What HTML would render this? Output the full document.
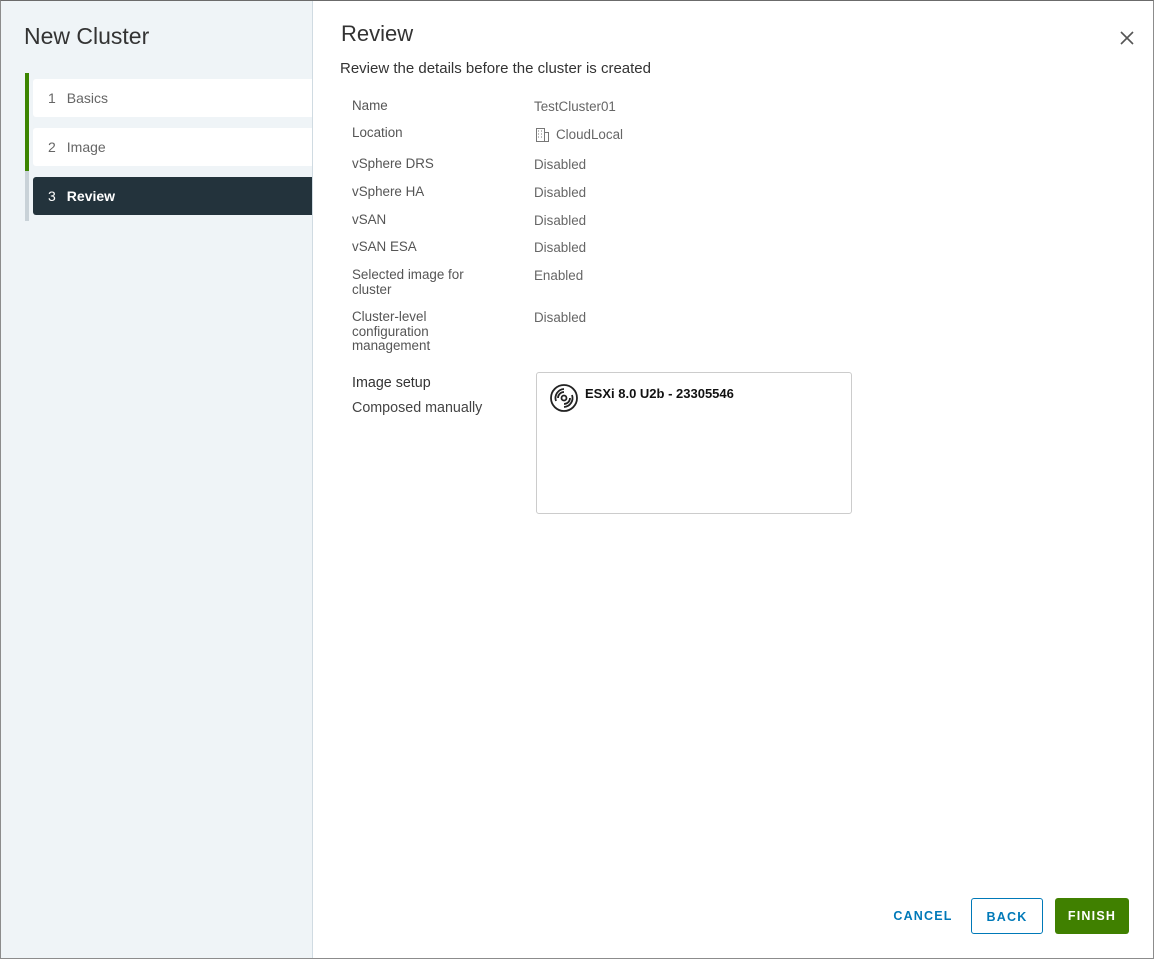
<!DOCTYPE html>
<html><head><style>
*{box-sizing:border-box;margin:0;padding:0}
body{width:1154px;height:959px;font-family:"Liberation Sans",sans-serif;background:#fff;position:relative;overflow:hidden}
.frame{position:absolute;left:0;top:0;width:1154px;height:959px;border:1px solid #8c8c8c;border-top-color:#6b6b6b}
.left{position:absolute;left:1px;top:1px;width:312px;height:957px;background:#eff4f7;border-right:1px solid #d0dbe2}
.title{position:absolute;left:24px;top:23px;font-size:23px;color:#333}
.bar{position:absolute;left:25px;width:4px}
.step{position:absolute;left:33px;width:279px;height:38px;background:#fff;border-radius:3px 0 0 3px;font-size:14px;color:#666;padding:11px 0 0 15px}
.step b{font-weight:normal;margin-right:11px}
.step.act{background:#23333c;color:#fff;font-weight:bold}
.h{position:absolute;left:341px;top:21px;font-size:22px;color:#333}
.sub{position:absolute;left:340px;top:60px;font-size:15px;color:#333}
.l{position:absolute;left:352px;font-size:13.4px;color:#555;line-height:14.5px}
.v{position:absolute;left:534px;font-size:13.4px;color:#666}
.box{position:absolute;left:536px;top:372px;width:316px;height:142px;border:1px solid #ccc;border-radius:3px}
.btn{position:absolute;top:898px;height:36px;font-size:12.5px;font-weight:bold;letter-spacing:1.2px;padding-top:11px;text-align:center;border-radius:3px}
</style></head><body>
<div class="left">
</div>
<div class="title">New Cluster</div>
<div class="bar" style="top:73px;height:98px;background:#3c8500"></div>
<div class="bar" style="top:171px;height:50px;background:#c9d2d8"></div>
<div class="step" style="top:79px"><b>1</b>Basics</div>
<div class="step" style="top:128px"><b>2</b>Image</div>
<div class="step act" style="top:177px"><b>3</b>Review</div>
<div class="h">Review</div>
<svg style="position:absolute;left:1120px;top:31px" width="14" height="14"><path d="M1 1L13 13M13 1L1 13" stroke="#555" stroke-width="1.6"/></svg>
<div class="sub">Review the details before the cluster is created</div>
<div class="l" style="top:99px">Name</div><div class="v" style="top:99px">TestCluster01</div>
<div class="l" style="top:126px">Location</div>
<svg style="position:absolute;left:536px;top:128px" width="13" height="14"><rect x="0.5" y="0.5" width="8" height="13" fill="none" stroke="#777"/><rect x="8.5" y="4.5" width="4" height="9" fill="none" stroke="#777"/><path d="M2 3h1M5 3h1M2 6h1M5 6h1M2 9h1M5 9h1" stroke="#777"/></svg>
<div class="v" style="top:127px;left:556px">CloudLocal</div>
<div class="l" style="top:157px">vSphere DRS</div><div class="v" style="top:157px">Disabled</div>
<div class="l" style="top:185px">vSphere HA</div><div class="v" style="top:185px">Disabled</div>
<div class="l" style="top:213px">vSAN</div><div class="v" style="top:213px">Disabled</div>
<div class="l" style="top:240px">vSAN ESA</div><div class="v" style="top:240px">Disabled</div>
<div class="l" style="top:268px">Selected image for<br>cluster</div><div class="v" style="top:268px">Enabled</div>
<div class="l" style="top:310px">Cluster-level<br>configuration<br>management</div><div class="v" style="top:310px">Disabled</div>
<div class="l" style="top:376px;font-size:14.3px;color:#333">Image setup</div>
<div class="l" style="top:401px;font-size:14.3px;color:#444">Composed manually</div>
<div class="box"></div>
<svg style="position:absolute;left:549px;top:383px" width="30" height="30" fill="none" stroke="#222" stroke-width="1.8"><circle cx="15" cy="15" r="13"/><circle cx="15" cy="15" r="2.5"/><path d="M9 15a6 6 0 0 1 6-6M7 18a9 9 0 0 1 8-12M21 15a6 6 0 0 1-6 6M23 12a9 9 0 0 1-8 12"/></svg>
<div style="position:absolute;left:585px;top:386px;font-size:13px;font-weight:bold;color:#111">ESXi 8.0 U2b - 23305546</div>
<div class="btn" style="left:888px;width:70px;color:#0079b8">CANCEL</div>
<div class="btn" style="left:971px;width:72px;border:1px solid #0079b8;color:#0079b8">BACK</div>
<div class="btn" style="left:1055px;width:74px;background:#408000;color:#fff">FINISH</div>
<div class="frame"></div>
</body></html>
